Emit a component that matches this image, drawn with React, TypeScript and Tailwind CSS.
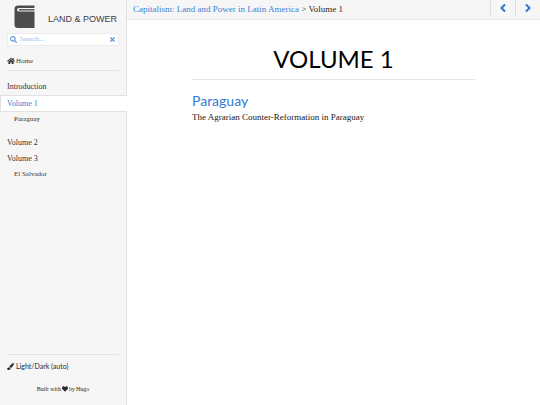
import React from "react";
import { FaHome, FaSearch, FaTimes, FaHeart, FaPaintBrush } from "react-icons/fa";

const serif = "font-['Liberation_Serif',serif]";

function BookLogo() {
  return (
    <svg viewBox="0 0 22 24" className="h-6 w-[22px] shrink-0" aria-hidden="true">
      <path d="M4 0.5H20.5V3H5Q3 3 3 4.8T5 6.6H20.5V23H4Q0.5 23 0.5 19.5V4Q0.5 0.5 4 0.5Z" fill="#4c4c4c" />
      <path d="M5 4.1H20.5V5.5H5Z" fill="#4c4c4c" />
    </svg>
  );
}

function Chevron({ d }: { d: string }) {
  return (
    <svg viewBox="0 0 8 10" className="h-[10px] w-2" fill="none" stroke="currentColor" strokeWidth="2" aria-hidden="true">
      <path d={d} />
    </svg>
  );
}

function Logo() {
  return (
    <a href="#" className="flex items-center gap-3 pl-[7px] font-['Liberation_Sans',sans-serif] text-[9px] leading-5 whitespace-nowrap text-[#404040]">
      <BookLogo />
      <span className="pt-1">LAND &amp; POWER</span>
    </a>
  );
}

function SearchBox() {
  return (
    <div className="mt-1 flex h-[13px] items-center gap-[3px] rounded-xs border border-[#ececec] bg-white px-[2px] text-[#5b93d8]">
      <label htmlFor="search" aria-label="Search">
        <FaSearch size={7} />
      </label>
      <input
        id="search"
        type="text"
        placeholder="Search..."
        className="h-[11px] min-w-0 flex-1 bg-transparent text-[7px] leading-[11px] outline-none placeholder:text-[#8fb9ea]"
      />
      <button type="button" aria-label="Clear search">
        <FaTimes size={7} />
      </button>
    </div>
  );
}

type Entry = { title: string; active?: boolean; children?: string[] };

const entries: Entry[] = [
  { title: "Introduction" },
  { title: "Volume 1", active: true, children: ["Paraguay"] },
  { title: "Volume 2" },
  { title: "Volume 3", children: ["El Salvador"] },
];

function Menu() {
  return (
    <ul className="pt-2">
      {entries.map((entry) => (
        <li key={entry.title} className={entry.active ? "-mr-px pb-[9px]" : ""}>
          <a
            href="#"
            className={
              entry.active
                ? "block h-[17px] border-y border-l border-[#e2e2e2] bg-white pl-[6px] text-[8px] leading-[15px] text-[#3b82d6]"
                : "block h-4 pl-[7px] text-[8px] leading-4 text-[#323232]"
            }
          >
            {entry.title}
          </a>
          {entry.children && (
            <ul>
              {entry.children.map((child) => (
                <li key={child}>
                  <a href="#" className="block pl-[14px] text-[7px] leading-[14px] text-[#323232]">
                    {child}
                  </a>
                </li>
              ))}
            </ul>
          )}
        </li>
      ))}
    </ul>
  );
}

function Sidebar() {
  return (
    <aside className="flex w-[127px] shrink-0 flex-col border-r border-[#e2e2e2] bg-[#f6f6f6]">
      <header className="px-[7px] pt-[5px]">
        <Logo />
        <SearchBox />
      </header>
      <nav>
        <div className="mx-[7px] mt-[9px] border-b border-[#e4e4e4] pb-[3px]">
          <a href="#" className="flex items-center gap-px text-[7px] leading-3 text-[#404040]">
            <FaHome size={8} />
            Home
          </a>
        </div>
        <Menu />
      </nav>
      <footer className="mt-auto px-[7px] pb-[10px]">
        <div className="flex items-center gap-[2px] border-t border-[#e4e4e4] pt-[5px] text-[#282828]">
          <FaPaintBrush size={7} />
          <select
            aria-label="Theme"
            className="h-3 flex-1 appearance-none bg-transparent font-['Lato',sans-serif] text-[7px] leading-3"
          >
            <option>Light/Dark (auto)</option>
          </select>
        </div>
        <p className="mt-[11px] flex items-center justify-center gap-px text-[6px] leading-3 text-[#282828]">
          Built with <FaHeart size={6} /> by <a href="#">Hugo</a>
        </p>
      </footer>
    </aside>
  );
}

function TopBar() {
  return (
    <div className="flex h-5 border-b border-[#e8e8e8] bg-[#f6f6f6] text-[9px]">
      <nav aria-label="Breadcrumb" className="flex-1 pl-[6px] leading-[18px] whitespace-nowrap text-[#282828]">
        <a href="#" className="text-[#3b82d6]">Capitalism: Land and Power in Latin America</a> &gt; Volume 1
      </nav>
      <button type="button" aria-label="Previous page" className="mb-[3px] flex w-[25px] items-center justify-center border-l border-[#e0e0e0] text-[#2f76cc]">
        <Chevron d="M6 1.5L2.5 5L6 8.5" />
      </button>
      <button type="button" aria-label="Next page" className="mb-[3px] flex w-[25px] items-center justify-center border-l border-[#e0e0e0] text-[#2f76cc]">
        <Chevron d="M2 1.5L5.5 5L2 8.5" />
      </button>
    </div>
  );
}

export default function App() {
  return (
    <div className={`flex min-h-screen bg-white ${serif}`}>
      <Sidebar />
      <main className="min-w-0 flex-1">
        <TopBar />
        <article className="mx-auto max-w-[283px] pt-6">
          <h1 className="border-b border-[#e4e4e4] pb-[5px] text-center font-['Lato',sans-serif] text-[24px] leading-[30px] text-black">
            VOLUME 1
          </h1>
          <h2 className="mt-3 font-['Lato',sans-serif] text-[14px] leading-[18px] text-[#2f7bd3]">
            <a href="#">Paraguay</a>
          </h2>
          <p className="mt-px text-[9px] leading-3 text-[#202020]">The Agrarian Counter-Reformation in Paraguay</p>
        </article>
      </main>
    </div>
  );
}
